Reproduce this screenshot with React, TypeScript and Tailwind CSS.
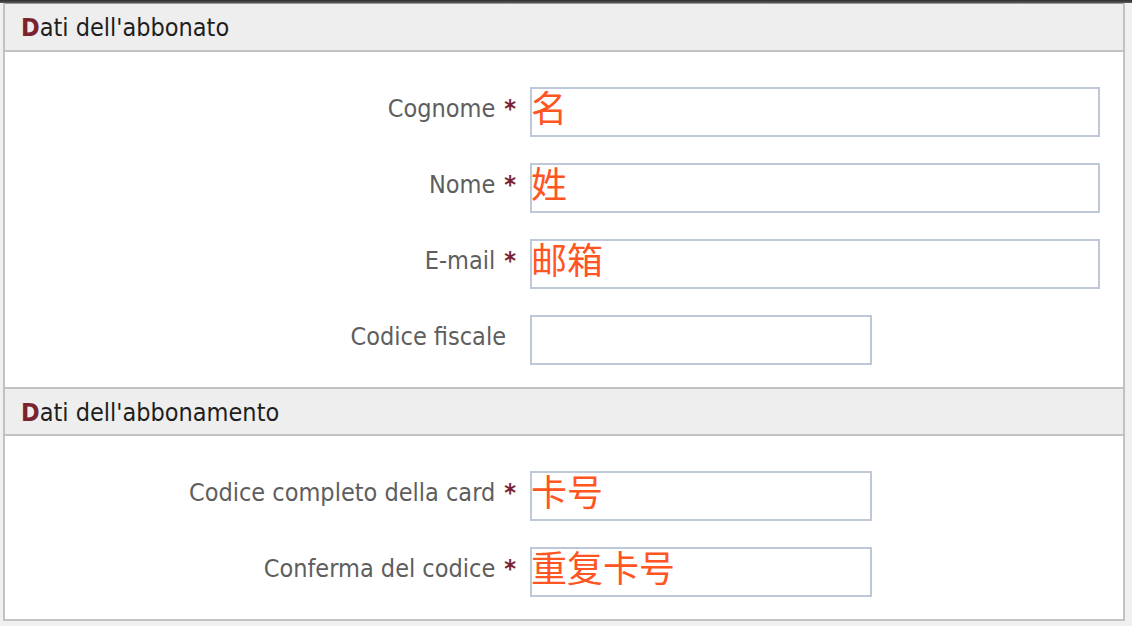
import React from "react";

const font = { fontFamily: '"DejaVu Sans Condensed", "DejaVu Sans", sans-serif' };
const cjk = { fontFamily: '"Noto Sans CJK SC", sans-serif' };

type Row = { label: string; req: boolean; wide: boolean; note?: string };

function Field({ r }: { r: Row }) {
  return (
    <div className="flex items-start">
      <div className="w-[513px] flex justify-end pt-[7px] h-[30px] leading-[30px]" style={font}>
        <span className={`text-[25px] text-[#5e5e5e] ${r.req ? "" : "pr-[12px]"}`}>{r.label}</span>
        {r.req && (
          <span className="text-[25px] font-bold text-[#7a2330] ml-[9px] pr-[2px]">*</span>
        )}
      </div>
      <div
        className={`relative ml-[12px] h-[50px] border-2 border-[#bfc8d8] bg-white ${
          r.wide ? "w-[570px]" : "w-[342px]"
        }`}
      >
        {r.note && (
          <span
            className="absolute left-[-1px] top-[-1px] text-[36px] leading-none text-[#ff5522] whitespace-nowrap"
            style={cjk}
          >
            {r.note}
          </span>
        )}
      </div>
    </div>
  );
}

function Header({ rest, first }: { rest: string; first?: boolean }) {
  return (
    <div
      className={`h-[49px] bg-[#eeeeee] border-b-2 border-[#c2c2c2] ${
        first ? "border-t border-t-[#9a9a9a]" : "border-t-2 border-t-[#c2c2c2]"
      } pl-[16px] flex items-center`}
      style={font}
    >
      <span className="text-[25px] text-[#1e1e1e] leading-none mt-[1px]">
        <span className="font-bold text-[#7a2330]">D</span>
        {rest}
      </span>
    </div>
  );
}

export default function App() {
  const s1: Row[] = [
    { label: "Cognome", req: true, wide: true, note: "名" },
    { label: "Nome", req: true, wide: true, note: "姓" },
    { label: "E-mail", req: true, wide: true, note: "邮箱" },
    { label: "Codice fiscale", req: false, wide: false },
  ];
  const s2: Row[] = [
    { label: "Codice completo della card", req: true, wide: false, note: "卡号" },
    { label: "Conferma del codice", req: true, wide: false, note: "重复卡号" },
  ];
  return (
    <div className="w-[1132px] h-[626px] overflow-hidden bg-[#f0f0f0]">
      <div className="h-[3px] bg-gradient-to-b from-[#2e2e2e] to-[#5a5a5a]" />
      <div className="ml-[3px] w-[1122px] border-x-2 border-b-2 border-[#c2c2c2] bg-white">
        <Header rest="ati dell'abbonato" first />
        <div className="flex flex-col gap-[26px] pt-[35px] pb-[22px]">
          {s1.map((r) => (
            <Field key={r.label} r={r} />
          ))}
        </div>
        <Header rest="ati dell'abbonamento" />
        <div className="flex flex-col gap-[26px] pt-[35px] pb-[22px]">
          {s2.map((r) => (
            <Field key={r.label} r={r} />
          ))}
        </div>
      </div>
    </div>
  );
}
